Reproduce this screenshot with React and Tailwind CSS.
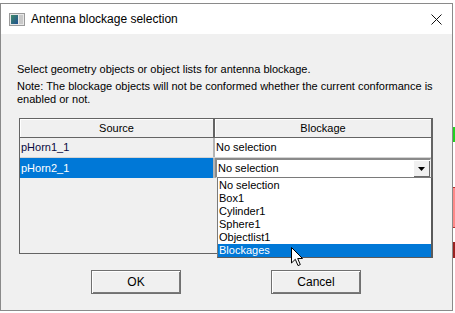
import React from "react";

const body = { fontFamily: '"Liberation Sans", Arial, sans-serif' };

const items = ["No selection", "Box1", "Cylinder1", "Sphere1", "Objectlist1", "Blockages"];

function TitleIcon() {
  return (
    <svg width="16" height="13" viewBox="0 0 16 13">
      <defs>
        <linearGradient id="ti" x1="0" y1="0" x2="1" y2="1">
          <stop offset="0" stopColor="#3f8a6a" />
          <stop offset="1" stopColor="#1f4f8f" />
        </linearGradient>
      </defs>
      <rect x="0.5" y="0.5" width="15" height="12" fill="#e8e8e8" stroke="#9a9a9a" />
      <rect x="2" y="2" width="7" height="9" fill="url(#ti)" />
      <rect x="10" y="2" width="4" height="9" fill="#c9c9c9" />
    </svg>
  );
}

function Cursor() {
  return (
    <svg width="13" height="20" viewBox="0 0 13 20" className="absolute left-[291px] top-[247px]">
      <path
        d="M0.5 0.5 L0.5 16 L4.3 12.3 L7 18.6 L9.3 17.6 L6.7 11.5 L11.5 11.5 Z"
        fill="#fff"
        stroke="#000"
        strokeWidth="1"
        strokeLinejoin="miter"
      />
    </svg>
  );
}

function Button({ children }) {
  return (
    <div className="w-[90px] h-[24px] border border-[#707070] bg-[#f0f0f0] shadow-[inset_1px_1px_0_#fff,inset_-1px_-1px_0_#7a7a7a] flex items-center justify-center text-[12px] text-black">
      {children}
    </div>
  );
}

export default function App() {
  return (
    <div className="relative w-[455px] h-[313px] bg-white flex overflow-hidden" style={body}>
      <div className="mt-[3px] w-[453px] h-[308px] border border-[#8a8a8a] flex flex-col bg-[#f0f0f0]">
        {/* title bar */}
        <div className="h-[30px] bg-white flex items-center pl-[8px] pr-[10px]">
          <TitleIcon />
          <span className="ml-[6px] text-[12px] text-black">Antenna blockage selection</span>
          <svg width="11" height="11" viewBox="0 0 11 11" className="ml-auto">
            <path d="M0.5 0.5 L10.5 10.5 M10.5 0.5 L0.5 10.5" stroke="#111" strokeWidth="1" />
          </svg>
        </div>

        {/* body */}
        <div className="flex-1 flex flex-col pl-[16px] pt-[29px] text-[11px] leading-[13px] text-black">
          <p>Select geometry objects or object lists for antenna blockage.</p>
          <p className="mt-[4px]">
            Note: The blockage objects will not be conformed whether the current conformance is
            <br />
            enabled or not.
          </p>

          <div className="relative mt-[12px] ml-[2px] w-[414px] h-[136px] border border-r-2 border-[#646464] bg-[#f0f0f0] flex flex-col">
            <div className="flex h-[19px] border-b border-[#646464]">
              <div className="w-[195px] border-r-2 border-[#646464] shadow-[inset_1px_1px_0_#fff] flex items-center justify-center">
                Source
              </div>
              <div className="flex-1 shadow-[inset_1px_1px_0_#fff] flex items-center justify-center">
                Blockage
              </div>
            </div>
            <div className="flex h-[20px] border-b border-[#d4d4d4]">
              <div className="w-[195px] border-r-2 border-[#b4b4b4] flex items-center pl-[1px] text-[#0a0a40]">
                pHorn1_1
              </div>
              <div className="flex-1 bg-white flex items-center pl-[1px]">No selection</div>
            </div>
            <div className="flex h-[20px]">
              <div className="w-[195px] border-r-2 border-[#b4b4b4] bg-[#0078d7] text-white flex items-center pl-[1px]">
                pHorn2_1
              </div>
              <div className="flex-1 bg-white border border-t-2 border-l-2 border-[#8a8a8a] border-b-[#f0f0f0] border-r-[#f0f0f0] flex items-center pl-[1px]">
                <span>No selection</span>
                <div className="ml-auto w-[17px] h-full bg-[#f0f0f0] shadow-[inset_1px_1px_0_#fff,inset_-1px_-1px_0_#6a6a6a] flex items-center justify-center">
                  <svg width="7" height="4" viewBox="0 0 7 4">
                    <path d="M0 0 H7 L3.5 4 Z" fill="#000" />
                  </svg>
                </div>
              </div>
            </div>

            {/* open dropdown list */}
            <div className="absolute left-[197px] top-[58px] w-[216px] h-[81px] bg-white border border-[#7a7a7a] border-r-2 border-b-2 border-r-[#5a5a5a] border-b-[#5a5a5a] flex flex-col pt-[1px]">
              {items.map((it) => (
                <div
                  key={it}
                  className={
                    it === "Blockages"
                      ? "h-[13px] bg-[#0078d7] text-white pl-[1px] flex items-center"
                      : "h-[13px] pl-[1px] flex items-center"
                  }
                >
                  {it}
                </div>
              ))}
            </div>
          </div>

          <div className="flex mt-[16px] ml-[74px] gap-[90px]">
            <Button>OK</Button>
            <Button>Cancel</Button>
          </div>
        </div>
      </div>

      {/* edge of whatever lies behind the dialog */}
      <div className="w-[2px] flex flex-col">
        <div className="h-[127px]" />
        <div className="h-[15px] bg-[#22d222]" />
        <div className="h-[45px]" />
        <div className="h-[41px] bg-[#ff8888] border-t border-b border-[#b03030]" />
        <div className="h-[14px]" />
        <div className="h-[16px] bg-[#9a2020]" />
      </div>

      <Cursor />
    </div>
  );
}
